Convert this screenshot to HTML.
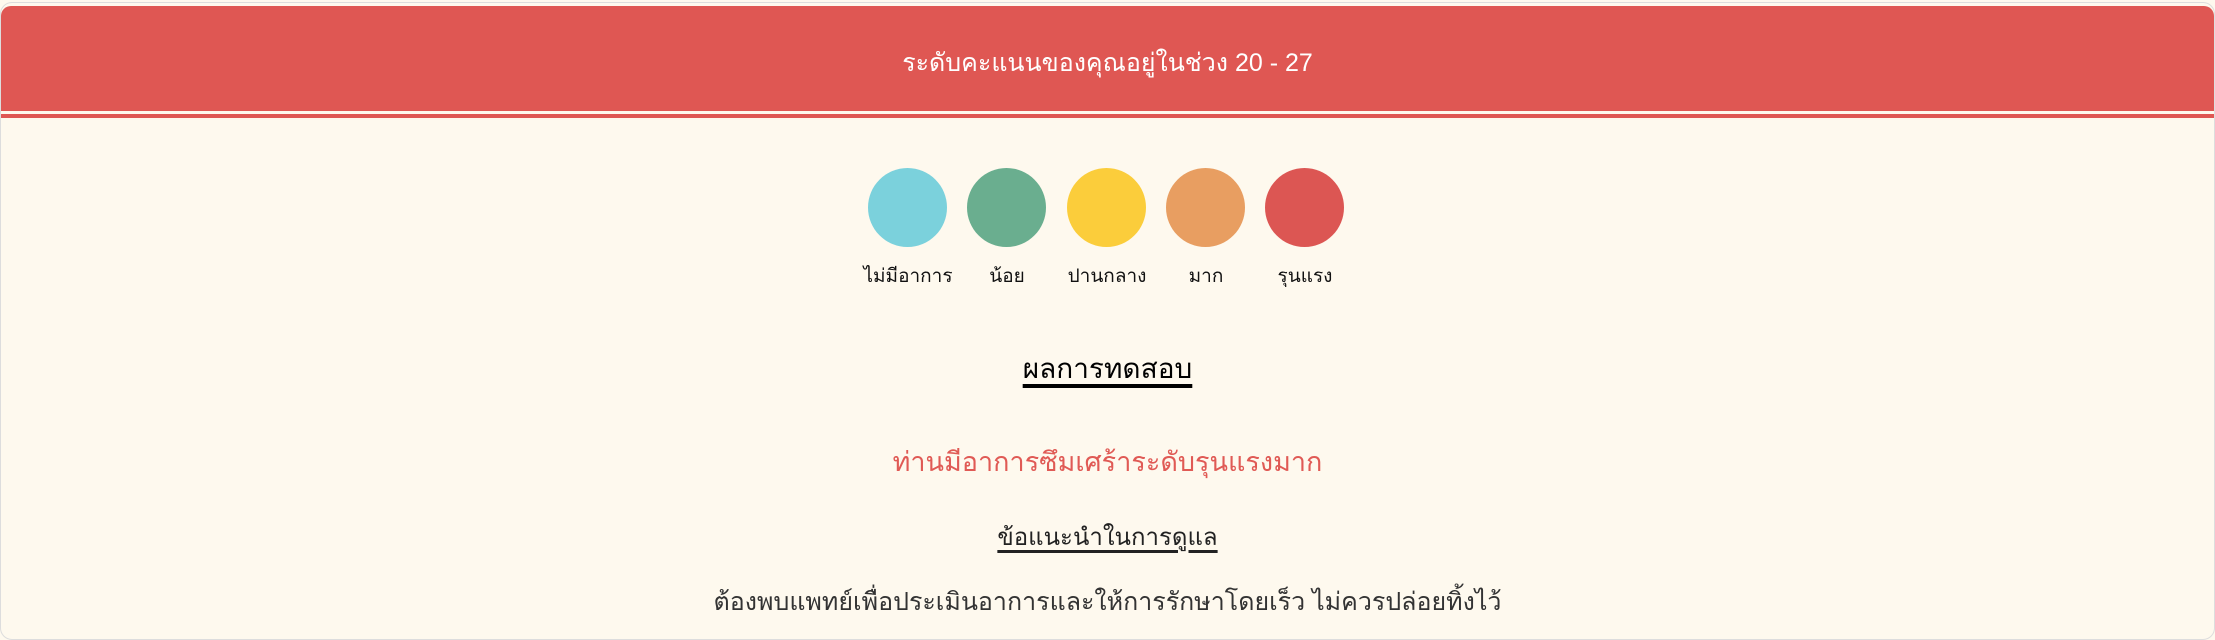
<!DOCTYPE html>
<html><head><meta charset="utf-8"><style>
html,body{margin:0;padding:0;width:2215px;height:640px;overflow:hidden;background:#fef9ee;font-family:"Liberation Sans","DejaVu Sans",sans-serif;}
.card{position:absolute;left:0;top:2px;width:2213px;height:636px;border:1px solid #ddd;border-radius:12px;background:#fef9ee;overflow:hidden;}
.hdr{position:absolute;left:0;top:3px;width:100%;height:105px;background:#df5753;border-radius:10px 10px 0 0;}
.line{position:absolute;left:0;top:111px;width:100%;height:4px;background:#df5753;}
.ht{position:absolute;left:0;width:100%;top:40px;text-align:center;color:#fff;font-size:25px;}
.c{position:absolute;top:168px;width:79px;height:79px;border-radius:50%;}
.l{position:absolute;top:261px;width:140px;text-align:center;font-size:19px;color:#111;}
.t{position:absolute;left:0;width:2215px;text-align:center;}
</style></head><body>
<div class="card">
<div class="hdr"></div><div class="line"></div>
<div class="ht">ระดับคะแนนของคุณอยู่ในช่วง 20 - 27</div>
</div>
<div class="c" style="left:868px;background:#7bd1dc"></div>
<div class="c" style="left:967px;background:#6aae8f"></div>
<div class="c" style="left:1067px;background:#fbcd3b"></div>
<div class="c" style="left:1166px;background:#e89e61"></div>
<div class="c" style="left:1265px;background:#dc5653"></div>
<div class="l" style="left:838px">ไม่มีอาการ</div>
<div class="l" style="left:937px">น้อย</div>
<div class="l" style="left:1037px">ปานกลาง</div>
<div class="l" style="left:1136px">มาก</div>
<div class="l" style="left:1235px">รุนแรง</div>
<div class="t" style="top:347px;font-size:28px;color:#000;"><span style="text-decoration:underline;text-decoration-thickness:4px;text-underline-offset:6px">ผลการทดสอบ</span></div>
<div class="t" style="top:440px;font-size:27px;color:#e05a55;">ท่านมีอาการซึมเศร้าระดับรุนแรงมาก</div>
<div class="t" style="top:517px;font-size:24px;color:#222;"><span style="text-decoration:underline;text-decoration-thickness:3px;text-underline-offset:5px">ข้อแนะนำในการดูแล</span></div>
<div class="t" style="top:582px;font-size:25px;color:#333;">ต้องพบแพทย์เพื่อประเมินอาการและให้การรักษาโดยเร็ว ไม่ควรปล่อยทิ้งไว้</div>
</body></html>
